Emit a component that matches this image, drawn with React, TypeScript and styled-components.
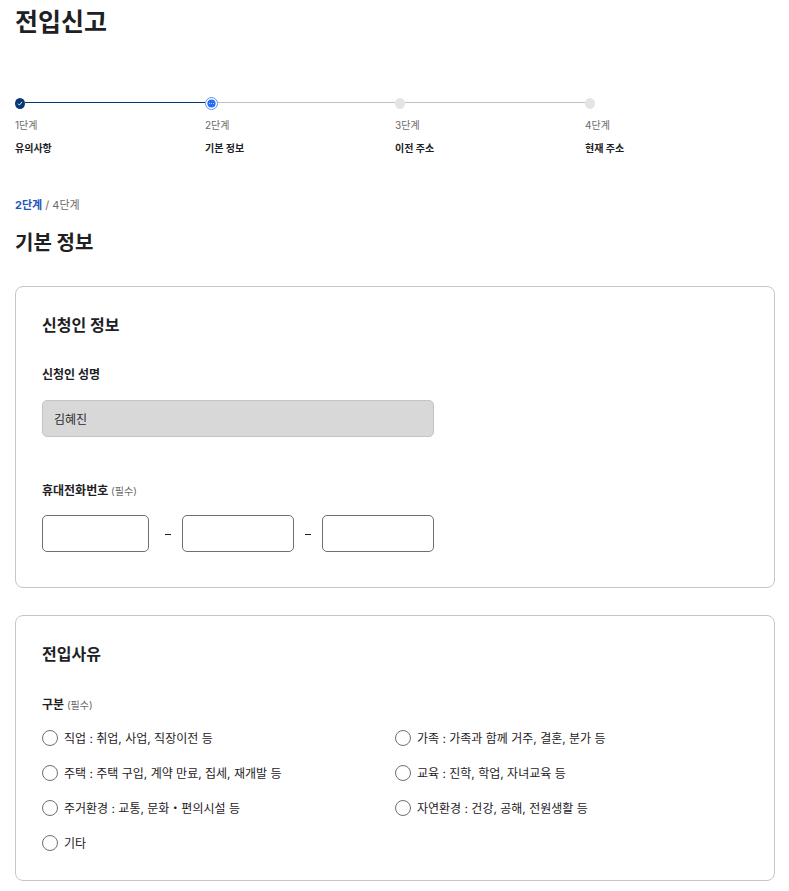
import React from "react";
import styled, { createGlobalStyle } from "styled-components";

const GlobalStyle = createGlobalStyle`
  *, *::before, *::after { box-sizing: border-box; }
  body {
    margin: 0;
    background: #fff;
    color: #1e2124;
    font-family: Inter, "Noto Sans CJK KR", sans-serif;
    font-size: 12px;
    line-height: 20px;
  }
  h1, h2, h3, p, ol, fieldset { margin: 0; padding: 0; border: 0; }
  input { font: inherit; color: inherit; }
`;

const Page = styled.main`
  padding: 4px 14px 10px 15px;
`;

const PageTitle = styled.h1`
  font-size: 25px;
  line-height: 36px;
  font-weight: 700;
`;

const Steps = styled.ol`
  display: grid;
  grid-template-columns: repeat(4, 1fr);
  margin-top: 56px;
  list-style: none;
`;

const Step = styled.li`
  display: flex;
  flex-direction: column;
`;

const Track = styled.div`
  display: flex;
  align-items: center;
  height: 14px;
`;

const Connector = styled.span<{ $done: boolean }>`
  flex: 1;
  height: 1px;
  margin-bottom: 1px;
  background: ${(p) => (p.$done ? "#063a74" : "#bfc1c4")};
`;

const Marker = styled.svg`
  display: block;
  flex: none;
`;

const StepNumber = styled.span`
  margin-top: 6px;
  font-size: 10px;
  line-height: 18px;
  color: #6b6b6b;
`;

const StepName = styled.strong`
  margin-top: 5px;
  font-size: 10px;
  line-height: 18px;
  font-weight: 700;
`;

const Progress = styled.p`
  margin-top: 38px;
  font-size: 11px;
  line-height: 20px;
  color: #6b6b6b;
`;

const Current = styled.strong`
  font-weight: 700;
  color: #1d56bc;
`;

const SectionTitle = styled.h2`
  margin-top: 13px;
  font-size: 20px;
  line-height: 30px;
  font-weight: 700;
`;

const Card = styled.section<{ $offset: number }>`
  margin-top: ${(p) => p.$offset}px;
  padding: 26px 26px 24px;
  border: 1px solid #c4c6c8;
  border-radius: 8px;
`;

const CardTitle = styled.h3`
  font-size: 16px;
  line-height: 24px;
  font-weight: 700;
`;

const Field = styled.div`
  display: flex;
  flex-direction: column;
  margin-top: 28px;
  max-width: 392px;
`;

const FieldLabel = styled.label`
  font-weight: 700;
`;

const Group = styled.fieldset<{ $offset: number }>`
  min-width: 0;
  margin-top: ${(p) => p.$offset}px;
`;

const Legend = styled.legend`
  padding: 0;
  font-weight: 700;
`;

const Required = styled.span`
  font-size: 10px;
  font-weight: 400;
  color: #6b6b6b;
`;

const TextInput = styled.input`
  width: 100%;
  min-width: 0;
  height: 37px;
  padding: 0 11px;
  border: 1px solid #6f6f70;
  border-radius: 5px;
  background: #fff;

  &:disabled {
    border-color: #c4c4c4;
    background: #d8d8d8;
    color: #2a2d30;
    opacity: 1;
  }
`;

const NameInput = styled(TextInput)`
  margin-top: 15px;
`;

const PhoneRow = styled.div`
  display: grid;
  grid-template-columns: 1fr 28px 1fr 28px 1fr;
  align-items: center;
  max-width: 392px;
  margin-top: 14px;
  padding-bottom: 11px;
`;

const PhoneStart = styled.div`
  display: flex;
  padding-right: 5px;
`;

const Dash = styled.span`
  justify-self: center;
  width: 6px;
  height: 1px;
  margin-top: 2px;
  background: #1e2124;
`;

const Options = styled.div`
  display: grid;
  grid-template-columns: 1fr 1fr;
  row-gap: 15px;
  margin-top: 13px;
  padding-bottom: 3px;
`;

const Option = styled.label`
  display: flex;
  align-items: center;
  gap: 6px;
  height: 20px;
  cursor: pointer;
`;

const OptionText = styled.span`
  padding-top: 2px;
`;

const Radio = styled.input`
  appearance: none;
  flex: none;
  width: 16px;
  height: 16px;
  margin: 0;
  border: 1px solid #6f6f70;
  border-radius: 50%;
  background: #fff;

  &:checked {
    border: 5px solid #256ef4;
  }
`;

type StepState = "done" | "current" | "upcoming";

const steps: { name: string; state: StepState }[] = [
  { name: "유의사항", state: "done" },
  { name: "기본 정보", state: "current" },
  { name: "이전 주소", state: "upcoming" },
  { name: "현재 주소", state: "upcoming" },
];

const reasons = [
  "직업 : 취업, 사업, 직장이전 등",
  "가족 : 가족과 함께 거주, 결혼, 분가 등",
  "주택 : 주택 구입, 계약 만료, 집세, 재개발 등",
  "교육 : 진학, 학업, 자녀교육 등",
  "주거환경 : 교통, 문화・편의시설 등",
  "자연환경 : 건강, 공해, 전원생활 등",
  "기타",
];

function StepMarker({ state }: { state: StepState }) {
  if (state === "current") {
    return (
      <Marker width="13" height="13" viewBox="0 0 13 13" aria-hidden="true">
        <circle cx="6.5" cy="6.5" r="6" fill="#fff" stroke="#5d92f5" strokeWidth="1" />
        <circle cx="6.5" cy="6.5" r="4.1" fill="#256ef4" />
        <g fill="#fff" opacity="0.8">
          <circle cx="4.5" cy="6.5" r="0.5" />
          <circle cx="6.5" cy="6.5" r="0.5" />
          <circle cx="8.5" cy="6.5" r="0.5" />
        </g>
      </Marker>
    );
  }
  return (
    <Marker width="10" height="11" viewBox="0 0 10 11" aria-hidden="true">
      <ellipse cx="5" cy="5.5" rx="5" ry="5.5" fill={state === "done" ? "#063a74" : "#e4e4e4"} />
      {state === "done" && (
        <path d="M2.9 5.6 4.4 7.1 7.1 3.9" fill="none" stroke="#fff" strokeWidth="0.9" />
      )}
    </Marker>
  );
}

export default function App() {
  return (
    <>
      <GlobalStyle />
      <Page>
        <PageTitle>전입신고</PageTitle>

        <Steps>
          {steps.map((step, i) => (
            <Step key={step.name} aria-current={step.state === "current" ? "step" : undefined}>
              <Track>
                <StepMarker state={step.state} />
                {i < steps.length - 1 && <Connector $done={step.state === "done"} />}
              </Track>
              <StepNumber>{i + 1}단계</StepNumber>
              <StepName>{step.name}</StepName>
            </Step>
          ))}
        </Steps>

        <Progress>
          <Current>2단계</Current> / 4단계
        </Progress>
        <SectionTitle>기본 정보</SectionTitle>

        <Card $offset={28}>
          <CardTitle>신청인 정보</CardTitle>
          <Field>
            <FieldLabel htmlFor="applicant">신청인 성명</FieldLabel>
            <NameInput id="applicant" type="text" defaultValue="김혜진" disabled />
          </Field>
          <Group $offset={44}>
            <Legend>
              휴대전화번호 <Required>(필수)</Required>
            </Legend>
            <PhoneRow>
              <PhoneStart>
                <TextInput type="tel" aria-label="휴대전화번호 앞자리" />
              </PhoneStart>
              <Dash />
              <TextInput type="tel" aria-label="휴대전화번호 가운데 자리" />
              <Dash />
              <TextInput type="tel" aria-label="휴대전화번호 뒷자리" />
            </PhoneRow>
          </Group>
        </Card>

        <Card $offset={27}>
          <CardTitle>전입사유</CardTitle>
          <Group $offset={29}>
            <Legend>
              구분 <Required>(필수)</Required>
            </Legend>
            <Options>
              {reasons.map((reason) => (
                <Option key={reason}>
                  <Radio type="radio" name="reason" value={reason} />
                  <OptionText>{reason}</OptionText>
                </Option>
              ))}
            </Options>
          </Group>
        </Card>
      </Page>
    </>
  );
}
